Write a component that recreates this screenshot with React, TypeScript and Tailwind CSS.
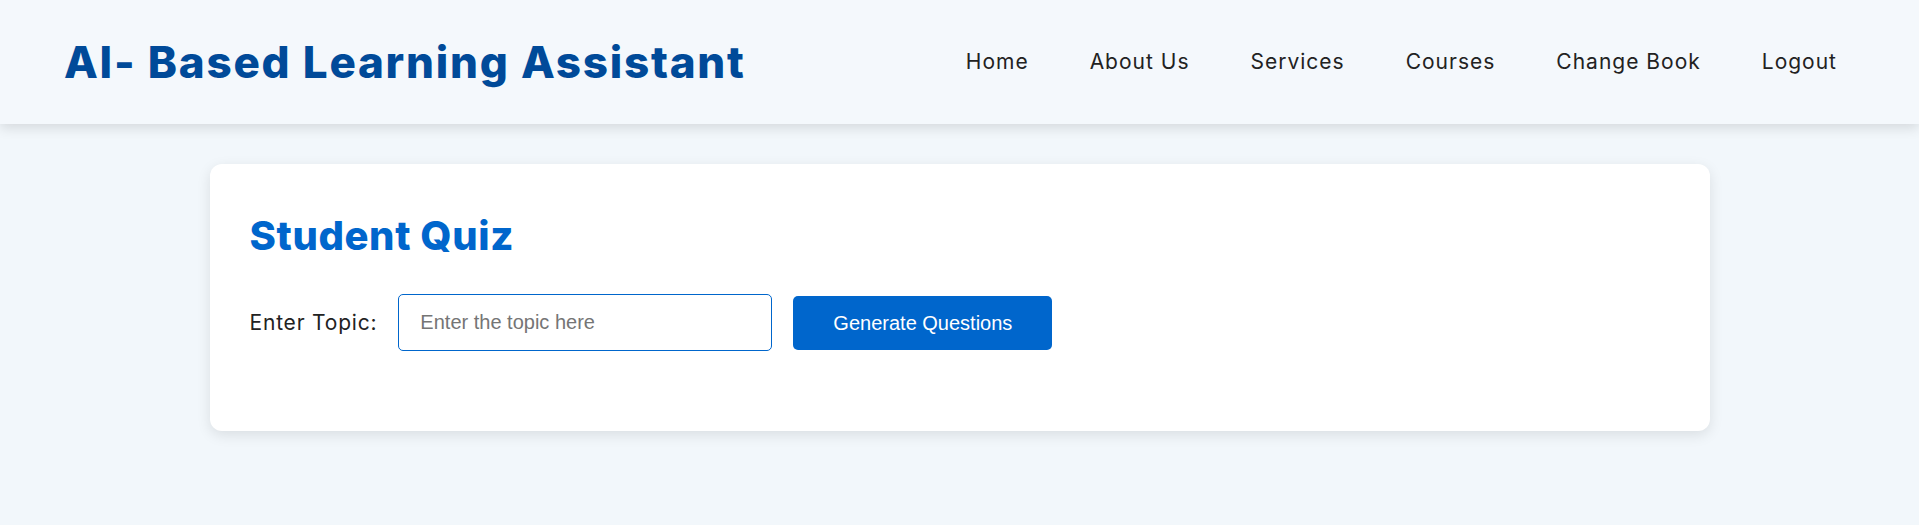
import { useState } from "react";

const navLinks = ["Home", "About Us", "Services", "Courses", "Change Book", "Logout"];

function Header() {
  return (
    <header className="h-[124px] bg-[#f4f8fc] shadow-[0_4px_12px_rgba(0,0,0,0.12)] flex items-center justify-between pl-[64px] pr-[82px] relative z-10">
      <h1 className="text-[44px] font-extrabold text-[#004a99] tracking-[1.75px] leading-none">
        AI- Based Learning Assistant
      </h1>
      <nav>
        <ul className="flex items-center gap-[61px]">
          {navLinks.map((link) => (
            <li key={link}>
              <a href="#" className="text-[21px] tracking-[1px] text-[#222] hover:text-[#0066cc]">
                {link}
              </a>
            </li>
          ))}
        </ul>
      </nav>
    </header>
  );
}

export default function App() {
  const [topic, setTopic] = useState("");

  return (
    <div className="min-h-screen bg-[#f2f7fb] font-['Inter',sans-serif]">
      <Header />
      <main className="pt-[40px] px-4">
        <div className="mx-auto w-[1500px] bg-white rounded-[12px] shadow-[0_4px_14px_rgba(0,0,0,0.1)] px-[40px] pt-[52px] pb-[80px]">
          <h2 className="text-[40px] font-extrabold text-[#0066cc] tracking-[0.6px] leading-none">Student Quiz</h2>
          <div className="flex items-center gap-[21px] mt-[38px]">
            <label htmlFor="topic" className="text-[21px] tracking-[0.8px] text-[#222]">
              Enter Topic:
            </label>
            <input
              id="topic"
              value={topic}
              onChange={(e) => setTopic(e.target.value)}
              placeholder="Enter the topic here"
              className="w-[374px] h-[57px] border border-[#0066cc] rounded-[5px] px-[21px] text-[20px] font-['Liberation_Sans',Arial,sans-serif] placeholder:text-[#757575] outline-none"
            />
            <button className="w-[259px] h-[54px] bg-[#0066cc] text-white rounded-[5px] text-[20px] font-['Liberation_Sans',Arial,sans-serif] hover:bg-[#0055aa]">
              Generate Questions
            </button>
          </div>
        </div>
      </main>
    </div>
  );
}
